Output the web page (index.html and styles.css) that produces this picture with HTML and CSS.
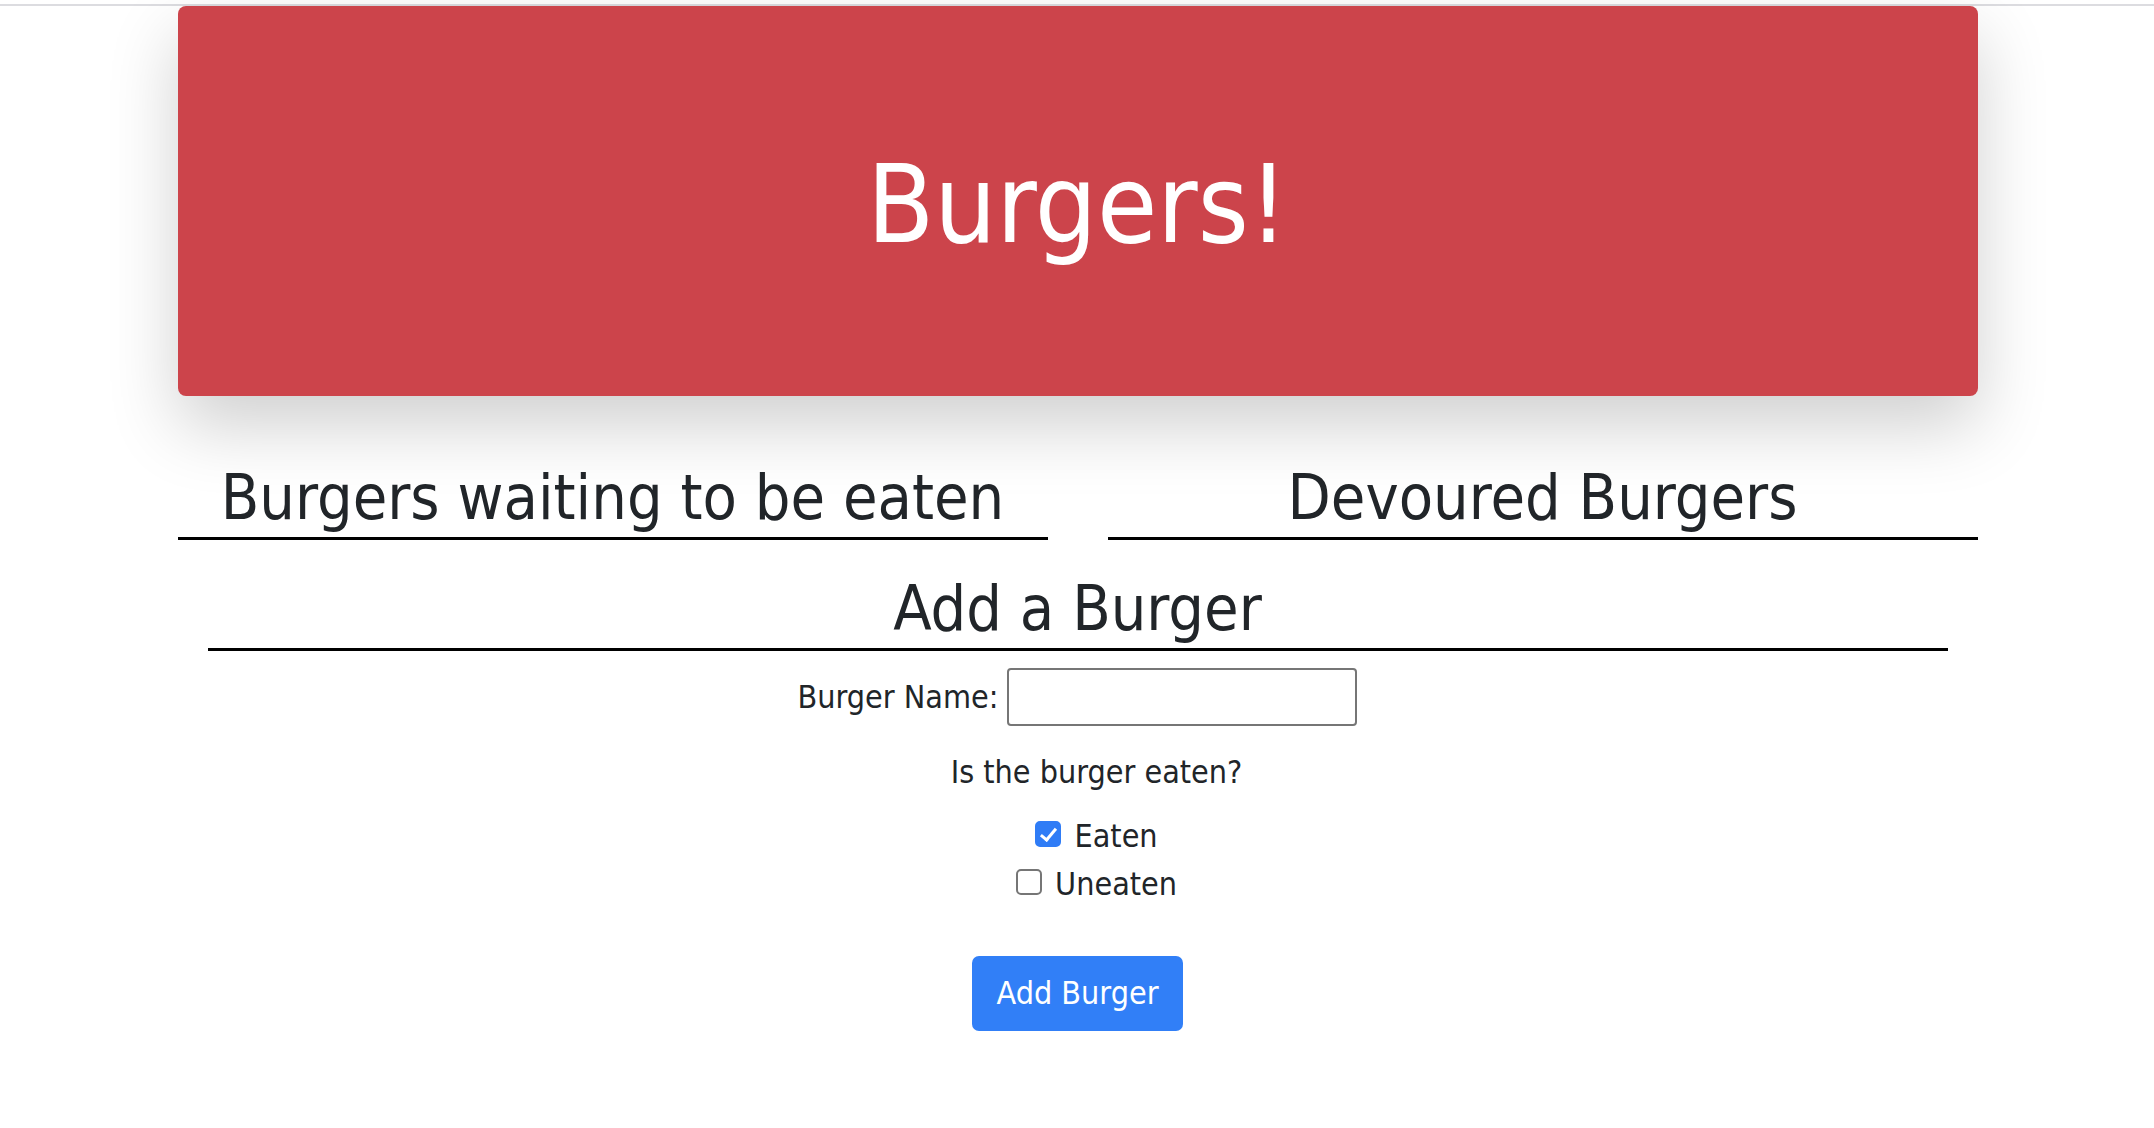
FILE: index.html
```html
<!DOCTYPE html>
<html lang="en">
<head>
<meta charset="utf-8">
<title>Burgers!</title>
<link rel="stylesheet" href="styles.css">
</head>
<body>
<div class="topline"></div>
<div class="container">
  <header class="jumbotron">
    <h1 class="title">Burgers!</h1>
  </header>
  <div class="columns">
    <section class="col">
      <h2 class="col-title">Burgers waiting to be eaten</h2>
    </section>
    <section class="col">
      <h2 class="col-title">Devoured Burgers</h2>
    </section>
  </div>
  <section class="add">
    <h2 class="col-title add-title">Add a Burger</h2>
    <form class="form">
      <div class="name-row">
        <label for="bn" class="name-label">Burger Name:</label>
        <input id="bn" type="text" class="name-input">
      </div>
      <div class="eaten-group">
        <p class="question">Is the burger eaten?</p>
        <div class="check-line"><input type="checkbox" class="cb" checked> <span>Eaten</span></div>
        <div class="check-line"><input type="checkbox" class="cb"> <span>Uneaten</span></div>
      </div>
      <div class="btn-row"><button type="button" class="btn">Add Burger</button></div>
    </form>
  </section>
</div>
</body>
</html>
```
FILE: styles.css
```css
html, body {
  margin: 0;
  padding: 0;
  background: #ffffff;
}
body {
  font-family: "DejaVu Sans Condensed", "DejaVu Sans", sans-serif;
  font-size: 32px;
  line-height: 1.5;
  color: #212529;
}
.topline {
  margin-top: 4px;
  height: 2px;
  background: #dcdce0;
}
.container {
  width: 1800px;
  margin: 0 auto;
  padding-left: 1px;
}
.jumbotron {
  height: 390px;
  background: #cc444b;
  border-radius: 8px;
  box-shadow: 0 30px 70px rgba(0, 0, 0, 0.19);
  display: flex;
  align-items: center;
  justify-content: center;
  margin-bottom: 64px;
}
.title {
  margin: 0;
  font-weight: 400;
  font-size: 109px;
  line-height: 1.2;
  color: #ffffff;
  padding-top: 8px;
}
.columns {
  display: grid;
  grid-template-columns: 1fr 1fr;
  column-gap: 60px;
  margin-bottom: 31px;
}
.col-title {
  margin: 0;
  font-weight: 400;
  font-size: 62.5px;
  line-height: 1.23;
  text-align: center;
  border-bottom: 3px solid #000000;
}
.add {
  margin: 0 30px;
}
.form {
  text-align: center;
}
.name-row {
  margin-top: 17px;
  display: flex;
  justify-content: center;
  align-items: center;
  gap: 9px;
}
.name-input {
  box-sizing: border-box;
  width: 350px;
  height: 58px;
  border: 2px solid #767676;
  border-radius: 4px;
  font: inherit;
  padding: 0 8px;
  margin: 0;
}
.eaten-group {
  margin-left: 38px;
}
.question {
  margin: 22px 0 16px;
}
.check-line {
  line-height: 48px;
}
.cb {
  -webkit-appearance: none;
  appearance: none;
  width: 26px;
  height: 26px;
  margin: 0 4px 0 0;
  box-sizing: border-box;
  border: 2px solid #767676;
  border-radius: 5px;
  background: #ffffff;
  vertical-align: 0px;
  position: relative;
}
.cb:checked {
  background: #2f7cf6;
  border-color: #2f7cf6;
}
.cb:checked::after {
  content: "";
  position: absolute;
  left: 7px;
  top: 2px;
  width: 6px;
  height: 13px;
  border: solid #ffffff;
  border-width: 0 3px 3px 0;
  transform: rotate(40deg);
}
.btn-row {
  margin-top: 48px;
}
.btn {
  font: inherit;
  line-height: 48px;
  color: #ffffff;
  background: #317ff7;
  border: 0;
  border-radius: 7px;
  padding: 13px 25px 14px;
  margin: 0;
}
```
